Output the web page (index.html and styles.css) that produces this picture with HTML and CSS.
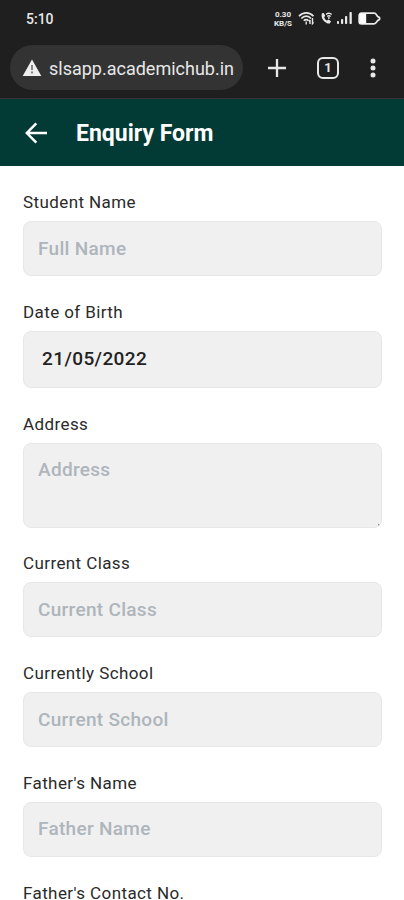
FILE: index.html
```
<!DOCTYPE html>
<html lang="en">
<head>
<meta charset="utf-8">
<meta name="viewport" content="width=device-width, initial-scale=1">
<title>Enquiry Form</title>
<link rel="stylesheet" href="styles.css">
</head>
<body>
<div class="browser">
  <div class="status">
    <span class="time">5:10</span>
    <div class="indicators">
      <span class="rate"><span>0.30</span><span>KB/S</span></span>
      <svg class="wifi" width="17" height="14" viewBox="0 0 17 14" fill="none" stroke="currentColor" stroke-width="1.7"><path d="M1 4.2C5-.2 11.500-.2 15.500 4.200M3.300 6.500c3-3.200 7-3.200 9.700 0M5.800 8.700c1.300-1.500 3.400-1.500 4.700 0"/><path d="M8.200 9.500v3M12 12V8M12 8l-1.300 1.300M14.500 6v5.500l1-1.200" stroke-width="1.400"/></svg>
      <svg class="call" width="13" height="13" viewBox="0 0 13 13" fill="none" stroke="currentColor"><path d="M2 1.200C.2 5.500 4.500 11.800 9.800 11.600L11 9.200 8.500 7.500 6.900 8.600C5.500 7.800 4.600 6.600 4.200 5.200L5.200 3.800 3.800 1z" fill="currentColor" stroke="none"/><path d="M6 2.500c1.800-1.600 4-1.600 5.700 0M7.200 4.500c1-.9 2.300-.9 3.400 0M8.900 5v2" stroke-width="1.300"/></svg>
      <svg class="signal" width="15" height="13" viewBox="0 0 15 13" fill="currentColor"><rect y="9" width="2" height="3" rx=".7"/><rect x="4" y="7" width="2.200" height="5" rx=".7"/><rect x="8" y="4" width="2.200" height="8" rx=".7"/><rect x="12.500" y="0" width="2.300" height="12" rx=".7"/></svg>
      <svg class="battery" width="23" height="13" viewBox="0 0 23 13"><path d="M3.500 1.200H16c2.200 0 2.400 1.800 3.400 3 .7.900 2.300.7 2.300 2.300s-1.600 1.400-2.300 2.300c-1 1.200-1.200 3-3.400 3H3.500A2.300 2.300 0 0 1 1.200 9.500v-6a2.300 2.300 0 0 1 2.300-2.300z" fill="none" stroke="currentColor" stroke-width="1.800"/><path d="M1.500 1.500h6.700v10H1.500z" fill="#fff"/></svg>
    </div>
  </div>
  <div class="toolbar">
    <div class="address">
      <svg width="20" height="18" viewBox="0 0 20 18"><path d="M10 .5 19.300 17H.7z" fill="#eee"/><path d="M10 6v5M10 12.500v2" stroke="#858585" stroke-width="2"/></svg>
      <span>slsapp.academichub.in</span>
    </div>
    <svg class="plus" width="20" height="20" viewBox="0 0 20 20" stroke="currentColor" stroke-width="2.300"><path d="M10 1v18M1 10h18"/></svg>
    <span class="tabs">1</span>
    <svg class="more" width="6" height="20" viewBox="0 0 6 20" fill="currentColor"><circle cx="3" cy="3" r="2.500"/><circle cx="3" cy="10" r="2.500"/><circle cx="3" cy="17" r="2.500"/></svg>
  </div>
</div>
<header class="header">
  <svg width="22" height="22" viewBox="0 0 22 22" fill="none" stroke="#fff" stroke-width="2.500"><path d="M22 11H2.500M11.300 1.300 1.800 11l9.500 9.700"/></svg>
  <h1>Enquiry Form</h1>
</header>
<form class="form">
  <div class="field"><label for="student">Student Name</label><input id="student" placeholder="Full Name"></div>
  <div class="field"><label for="dob">Date of Birth</label><input class="date" id="dob" value="21/05/2022"></div>
  <div class="field"><label for="address">Address</label><textarea id="address" placeholder="Address"></textarea></div>
  <div class="field"><label for="class">Current Class</label><input id="class" placeholder="Current Class"></div>
  <div class="field"><label for="school">Currently School</label><input id="school" placeholder="Current School"></div>
  <div class="field"><label for="father">Father's Name</label><input id="father" placeholder="Father Name"></div>
  <div class="field"><label for="contact">Father's Contact No.</label></div>
</form>
</body>
</html>
```
FILE: styles.css
```
* { box-sizing: border-box; }
body {
  margin: 0;
  height: 900px;
  overflow: hidden;
  background: #fff;
  font-family: Roboto, "Liberation Sans", sans-serif;
}
svg { display: block; flex: none; }
.browser {
  height: 99px;
  background: #1f1f1f;
  color: #e8e8e8;
  border-bottom: 1px solid #373237;
}
.status {
  height: 37px;
  padding: 0 23px 0 26px;
  display: flex;
  align-items: center;
  justify-content: space-between;
}
.time { font-size: 14px; font-weight: 500; }
.indicators { display: flex; align-items: center; }
.rate {
  width: 20px;
  display: flex;
  flex-direction: column;
  align-items: center;
  font-size: 8px;
  font-weight: 700;
  line-height: 9px;
}
.wifi { margin-left: 5px; }
.call { margin-left: 5px; }
.signal { margin-left: 4px; }
.battery { margin-left: 6px; }
.toolbar { display: flex; align-items: center; padding: 8px 28px 0 10px; }
.address {
  width: 233px;
  height: 45px;
  border-radius: 23px;
  background: #333;
  display: flex;
  align-items: center;
  gap: 7px;
  padding: 1px 0 0 12px;
  font-size: 18px;
  white-space: nowrap;
}
.plus { margin-left: 24px; }
.tabs {
  width: 22px;
  height: 22px;
  margin-left: 30px;
  border: 2px solid currentColor;
  border-radius: 6px;
  font-size: 13px;
  font-weight: 700;
  line-height: 18px;
  text-align: center;
}
.more { margin-left: 31px; }
.header {
  height: 67px;
  padding-left: 25px;
  display: flex;
  align-items: center;
  gap: 29px;
  background: #023a36;
}
h1 { margin: 0; padding-top: 2px; color: #fff; font-size: 23px; font-weight: 700; line-height: 28px; }
.form { padding: 26px 22px 0 23px; display: grid; gap: 25.750px; }
.field { display: grid; gap: 9px; }
label { height: 20px; line-height: 20px; font-size: 17px; letter-spacing: .4px; color: #2a2a2a; }
input, textarea {
  display: block;
  width: 100%;
  height: 55px;
  margin: 0;
  padding: 0 14px 1px;
  border: 1px solid #e6e7e8;
  border-radius: 8px;
  background: #f0f0f1;
  color: #222;
  font: 500 19px/22px Roboto, "Liberation Sans", sans-serif;
  letter-spacing: .3px;
  outline: 0;
}
.date { height: 57px; padding: 0 14px 2px 18px; letter-spacing: .4px; }
textarea {
  height: 85px;
  padding-top: 15px;
  resize: none;
  background: linear-gradient(#888, #888) right 2px bottom 2px / 2px 2px no-repeat border-box #f0f0f1;
}
::placeholder { color: #aeb5bb; opacity: 1; }
```
